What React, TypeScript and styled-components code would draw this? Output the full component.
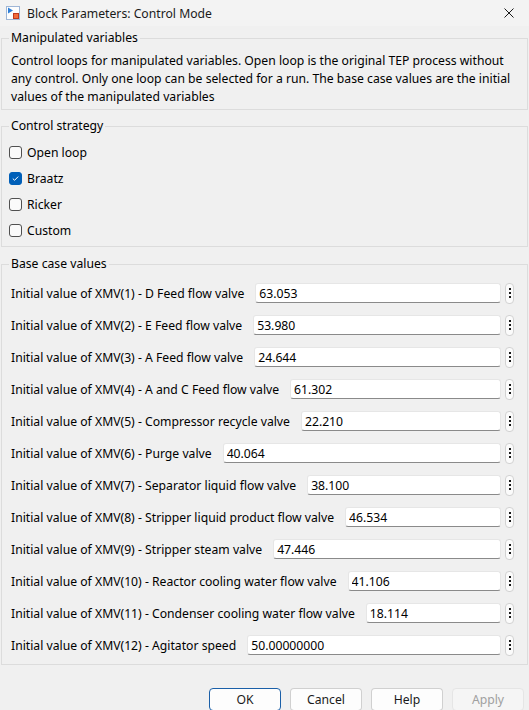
import React from 'react';
import styled, { createGlobalStyle } from 'styled-components';

const GlobalStyle = createGlobalStyle`
  html, body { margin: 0; padding: 0; background: #f0f0f0; }
  body { font-family: "Noto Sans", "Open Sans", sans-serif; font-size: 12.2px; color: #000; }
  * { box-sizing: border-box; }
`;

const Window = styled.div`
  width: 529px;
  height: 710px;
  overflow: hidden;
  background: #f0f0f0;
  display: flex;
  flex-direction: column;
`;

const TitleBar = styled.div`
  height: 26px;
  flex: none;
  display: flex;
  align-items: center;
  padding-left: 6px;
  background: #f3f3f3;
`;

const TitleText = styled.span`
  margin-left: 7px;
  font-size: 12.2px;
  color: #1a1a1a;
`;

const CloseButton = styled.div`
  margin-left: auto;
  width: 40px;
  height: 26px;
  display: flex;
  align-items: center;
  justify-content: center;
`;

const Body = styled.div`
  padding: 4px 1px 0 1px;
  display: flex;
  flex-direction: column;
`;

const Group = styled.fieldset<{ $gap?: number; $top?: number }>`
  margin: ${p => p.$gap ?? 0}px 0 0 0;
  padding: ${p => p.$top ?? 5}px 9px 3px 9px;
  border: 1px solid #dcdcdc;
  min-width: 0;
`;

const Legend = styled.legend`
  padding: 0 2px;
  margin-left: -2px;
  line-height: 16px;
  font-size: 12.2px;
`;

const Description = styled.p`
  margin: 0;
  line-height: 18px;
  white-space: nowrap;
`;

const CheckRow = styled.label`
  height: 26px;
  display: flex;
  align-items: center;
  margin-left: -2px;
`;

const CheckBox = styled.span<{ $checked?: boolean }>`
  width: 13px;
  height: 13px;
  border-radius: 3px;
  border: 1px solid ${p => (p.$checked ? '#005fb8' : '#505050')};
  background: ${p => (p.$checked ? '#005fb8' : '#fafafa')};
  display: flex;
  align-items: center;
  justify-content: center;
  margin-right: 5px;
  flex: none;
`;

const ParamRow = styled.div`
  height: 32px;
  display: flex;
  align-items: center;
  padding-right: 4px;
`;

const ParamLabel = styled.span`
  white-space: nowrap;
  margin-right: 11px;
`;

const ValueInput = styled.input`
  flex: 1;
  min-width: 0;
  height: 20px;
  border: 1px solid #e6e6e6;
  border-bottom-color: #8a8a8a;
  border-radius: 3px;
  background: #fff;
  padding: 0 3px;
  font: inherit;
  color: #000;
  outline: none;
`;

const MenuButton = styled.span`
  flex: none;
  width: 9px;
  height: 21px;
  margin-left: 4px;
  border: 1px solid #d2d2d2;
  border-radius: 4px;
  background: #fbfbfb;
  display: flex;
  flex-direction: column;
  align-items: center;
  justify-content: center;
  gap: 2px;
`;

const Dot = styled.span`
  width: 2px;
  height: 2px;
  background: #1a1a1a;
`;

const Footer = styled.div`
  margin-top: 23px;
  display: flex;
  justify-content: flex-end;
  gap: 9px;
  padding-right: 4px;
`;

const DialogButton = styled.button<{ $primary?: boolean; $disabled?: boolean }>`
  width: 72px;
  height: 23px;
  border-radius: 4px;
  font: inherit;
  font-size: 12.2px;
  background: ${p => (p.$disabled ? '#f5f5f5' : '#fdfdfd')};
  color: ${p => (p.$disabled ? '#a0a0a0' : '#1a1a1a')};
  border: 1px solid ${p => (p.$primary ? '#1a5fa8' : p.$disabled ? '#e5e5e5' : '#d0d0d0')};
  border-bottom-color: ${p => (p.$primary ? '#1a5fa8' : p.$disabled ? '#e5e5e5' : '#bdbdbd')};
  padding: 0;
`;

const params: [string, string][] = [
  ['Initial value of XMV(1) - D Feed flow valve', '63.053'],
  ['Initial value of XMV(2) - E Feed flow valve', '53.980'],
  ['Initial value of XMV(3) - A Feed flow valve', '24.644'],
  ['Initial value of XMV(4) - A and C Feed flow valve', '61.302'],
  ['Initial value of XMV(5) - Compressor recycle valve', '22.210'],
  ['Initial value of XMV(6) - Purge valve', '40.064'],
  ['Initial value of XMV(7) - Separator liquid flow valve', '38.100'],
  ['Initial value of XMV(8) - Stripper liquid product flow valve', '46.534'],
  ['Initial value of XMV(9) - Stripper steam valve', '47.446'],
  ['Initial value of XMV(10) - Reactor cooling water flow valve', '41.106'],
  ['Initial value of XMV(11) - Condenser cooling water flow valve', '18.114'],
  ['Initial value of XMV(12) - Agitator speed', '50.00000000'],
];

const strategies: [string, boolean][] = [
  ['Open loop', false],
  ['Braatz', true],
  ['Ricker', false],
  ['Custom', false],
];

const BlockIcon = () => (
  <svg width="14" height="14" viewBox="0 0 14 14">
    <rect x="0.5" y="0.5" width="13" height="13" fill="#fdfdfd" stroke="#9fb6d6" />
    <path d="M2 1.5 L7 4.5 L2 7.5 Z" fill="#2f7fd8" />
    <rect x="7.5" y="7.5" width="5" height="5" fill="#f26b3a" stroke="#c0391b" />
  </svg>
);

const CloseIcon = () => (
  <svg width="10" height="10" viewBox="0 0 10 10">
    <path d="M0.5 0.5 L9.5 9.5 M9.5 0.5 L0.5 9.5" stroke="#1a1a1a" strokeWidth="1" />
  </svg>
);

const CheckMark = () => (
  <svg width="9" height="9" viewBox="0 0 9 9">
    <path d="M1.8 4.6 L3.6 6.3 L7.2 2.6" stroke="#fff" strokeWidth="1" fill="none" />
  </svg>
);

export default function App() {
  return (
    <>
      <GlobalStyle />
      <Window>
        <TitleBar>
          <BlockIcon />
          <TitleText>Block Parameters: Control Mode</TitleText>
          <CloseButton>
            <CloseIcon />
          </CloseButton>
        </TitleBar>
        <Body>
          <Group $top={6}>
            <Legend>Manipulated variables</Legend>
            <Description>
              Control loops for manipulated variables. Open loop is the original TEP process without
              <br />
              any control. Only one loop can be selected for a run. The base case values are the initial
              <br />
              values of the manipulated variables
            </Description>
          </Group>
          <Group $gap={8}>
            <Legend>Control strategy</Legend>
            {strategies.map(([name, checked]) => (
              <CheckRow key={name}>
                <CheckBox $checked={checked}>{checked && <CheckMark />}</CheckBox>
                {name}
              </CheckRow>
            ))}
          </Group>
          <Group $gap={9}>
            <Legend>Base case values</Legend>
            {params.map(([label, value]) => (
              <ParamRow key={label}>
                <ParamLabel>{label}</ParamLabel>
                <ValueInput defaultValue={value} />
                <MenuButton>
                  <Dot />
                  <Dot />
                  <Dot />
                </MenuButton>
              </ParamRow>
            ))}
          </Group>
          <Footer>
            <DialogButton $primary>OK</DialogButton>
            <DialogButton>Cancel</DialogButton>
            <DialogButton>Help</DialogButton>
            <DialogButton $disabled>Apply</DialogButton>
          </Footer>
        </Body>
      </Window>
    </>
  );
}
